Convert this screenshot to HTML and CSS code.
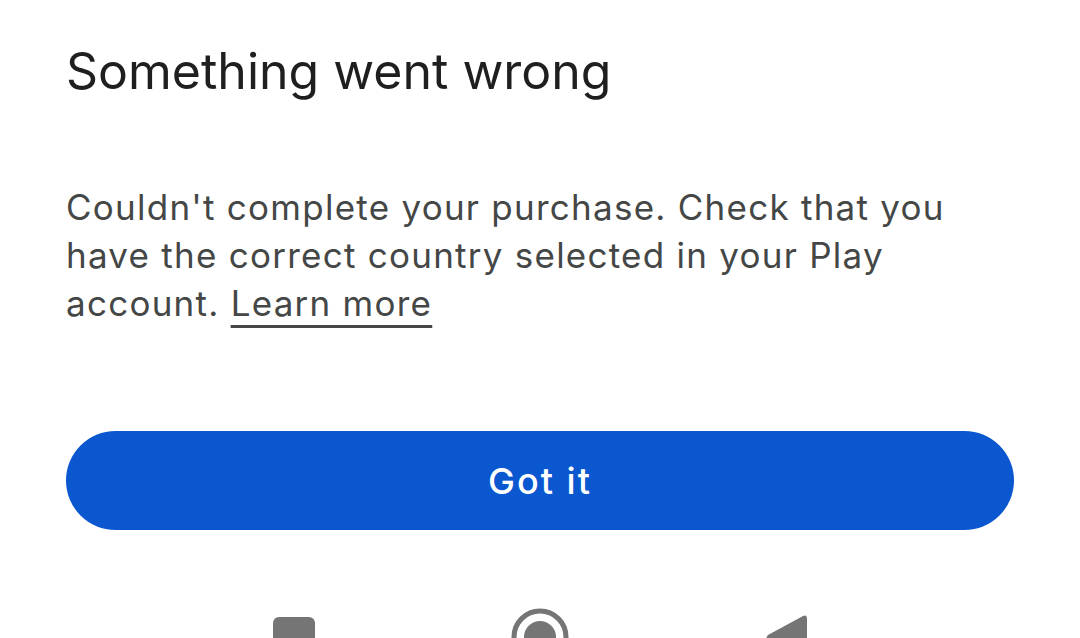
FILE: index.html
```html
<!DOCTYPE html>
<html lang="en">
<head>
<meta charset="utf-8">
<title>Something went wrong</title>
<link rel="stylesheet" href="styles.css">
</head>
<body>
<main class="dialog">
  <h1 class="title">Something went wrong</h1>
  <p class="message">Couldn't complete your purchase. Check that you have the correct country selected in your Play account. <a class="link" href="#">Learn more</a></p>
  <button class="primary" type="button">Got it</button>
</main>
<nav class="navbar">
  <svg class="nav-icon" width="42" height="42" viewBox="0 0 42 42"><rect x="0" y="0" width="42" height="42" rx="6" fill="#757575"/></svg>
  <svg class="nav-icon" width="58" height="58" viewBox="0 0 58 58"><circle cx="29" cy="29" r="26" fill="none" stroke="#757575" stroke-width="5"/><circle cx="29" cy="29" r="16" fill="#757575"/></svg>
  <svg class="nav-icon" width="42" height="48" viewBox="0 0 42 48"><path d="M38 2 Q42 0 42 5 L42 43 Q42 48 38 46 L3 27 Q0 24 3 21 Z" fill="#757575"/></svg>
</nav>
</body>
</html>
```
FILE: styles.css
```css
html, body {
  margin: 0;
  padding: 0;
  background: #ffffff;
}
body {
  width: 1080px;
  height: 638px;
  overflow: hidden;
  font-family: Inter, Roboto, sans-serif;
}
.dialog {
  display: flex;
  flex-direction: column;
  padding: 41px 66px 0 66px;
}
.title {
  margin: 0;
  font-size: 50px;
  line-height: 60px;
  font-weight: 400;
  color: #1f1f1f;
}
.message {
  margin: 82px 0 0 0;
  max-width: 900px;
  font-size: 35px;
  line-height: 48px;
  letter-spacing: 1.25px;
  color: #444746;
}
.link {
  color: #444746;
  text-decoration: underline;
  text-underline-offset: 9px;
  text-decoration-thickness: 3px;
}
.primary {
  margin-top: 104px;
  height: 99px;
  width: 948px;
  border: none;
  border-radius: 50px;
  background: #0b57d0;
  color: #ffffff;
  font-family: Inter, Roboto, sans-serif;
  font-size: 36px;
  font-weight: 500;
  letter-spacing: 2px;
  padding: 0;
}
.navbar {
  display: flex;
  justify-content: center;
  align-items: flex-start;
  margin-top: 78px;
}
.nav-icon:nth-child(1) { margin-top: 9px; margin-right: 196px; }
.nav-icon:nth-child(2) { margin-top: 0; margin-right: 196px; }
.nav-icon:nth-child(3) { margin-top: 6px; }
```
